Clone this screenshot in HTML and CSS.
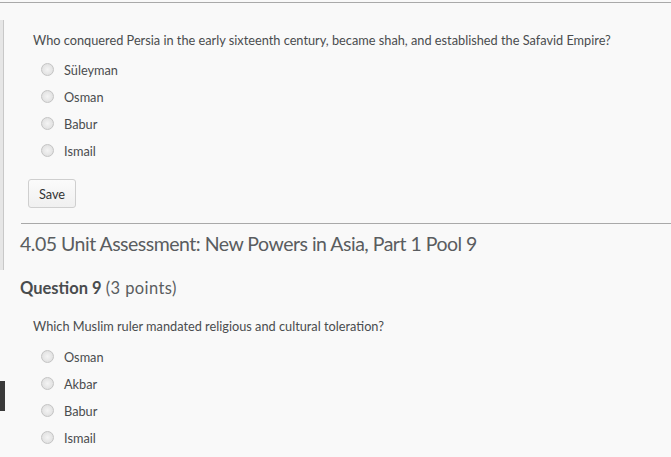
FILE: index.html
```html
<!DOCTYPE html>
<html>
<head>
<meta charset="utf-8">
<link rel="stylesheet" href="styles.css">
</head>
<body>
<div class="page">
  <div class="rail">
    <div class="rail-light"></div>
    <div class="rail-dark"></div>
  </div>
  <div class="content">
    <section class="question first">
      <p class="prompt">Who conquered Persia in the early sixteenth century, became shah, and established the Safavid Empire?</p>
      <ul class="options">
        <li><span class="radio"></span>Süleyman</li>
        <li><span class="radio"></span>Osman</li>
        <li><span class="radio"></span>Babur</li>
        <li><span class="radio"></span>Ismail</li>
      </ul>
      <button class="save">Save</button>
    </section>
    <hr class="divider">
    <h2 class="pool-title">4.05 Unit Assessment: New Powers in Asia, Part 1 Pool 9</h2>
    <h3 class="q-title"><strong>Question 9</strong> <span class="pts">(3 points)</span></h3>
    <section class="question second">
      <p class="prompt">Which Muslim ruler mandated religious and cultural toleration?</p>
      <ul class="options">
        <li><span class="radio"></span>Osman</li>
        <li><span class="radio"></span>Akbar</li>
        <li><span class="radio"></span>Babur</li>
        <li><span class="radio"></span>Ismail</li>
      </ul>
    </section>
  </div>
</div>
</body>
</html>
```

FILE: styles.css
```css
html, body {
  margin: 0;
  padding: 0;
  background: #f9f9f9;
  height: 100%;
  overflow: hidden;
}
body {
  font-family: "Lato", "Open Sans", sans-serif;
  color: #494c4e;
}
.page {
  display: flex;
  margin-top: 2px;
  border-top: 1px solid #a9a9a9;
  height: 454px;
}
.rail {
  width: 5px;
  flex: none;
  display: flex;
  flex-direction: column;
}
.rail-light {
  margin-top: 17px;
  height: 250px;
  background: #e6e6e6;
  border-right: 1px solid #c8c8c8;
  width: 3px;
}
.rail-dark {
  margin-top: 111px;
  height: 30px;
  width: 5px;
  background: #3a3a3a;
}
.content {
  flex: 1;
  padding-left: 15px;
}
.prompt {
  margin: 0 0 0 13px;
  font-size: 12.75px;
  line-height: 18px;
  color: #4a4c4e;
}
.first .prompt {
  margin-top: 28px;
}
.options {
  list-style: none;
  margin: 7px 0 0 21px;
  padding: 0;
}
.second .options {
  margin-top: 8px;
}
.options li {
  display: flex;
  align-items: center;
  height: 27px;
  font-size: 12.75px;
  color: #4a4c4e;
}
.radio {
  width: 11px;
  height: 11px;
  border-radius: 50%;
  border: 1px solid #c4c4c4;
  background: radial-gradient(circle at 50% 50%, #f4f4f4 0%, #e2e2e2 70%, #d4d4d4 100%);
  margin-right: 10px;
  flex: none;
}
.save {
  display: block;
  margin: 15px 0 0 8px;
  width: 48px;
  height: 29px;
  padding: 0;
  font-family: inherit;
  font-size: 12.75px;
  color: #333;
  background: linear-gradient(#fbfbfb, #f0f0f0);
  border: 1px solid #cfcfcf;
  border-radius: 3px;
}
.divider {
  margin: 15px 0 0 1px;
  border: none;
  border-top: 1px solid #a9a9a9;
  height: 0;
}
.pool-title {
  margin: 7px 0 0 0;
  font-weight: normal;
  font-size: 19.5px;
  letter-spacing: -0.5px;
  line-height: 26px;
  color: #5a5d60;
}
.q-title {
  margin: 21px 0 0 0;
  font-weight: normal;
  font-size: 16.5px;
  line-height: 20px;
  color: #5a5d60;
}
.q-title strong {
  font-weight: bold;
  color: #494c4e;
}
.q-title .pts {
  letter-spacing: 0.4px;
}
.second .prompt {
  margin-top: 19px;
}
```
